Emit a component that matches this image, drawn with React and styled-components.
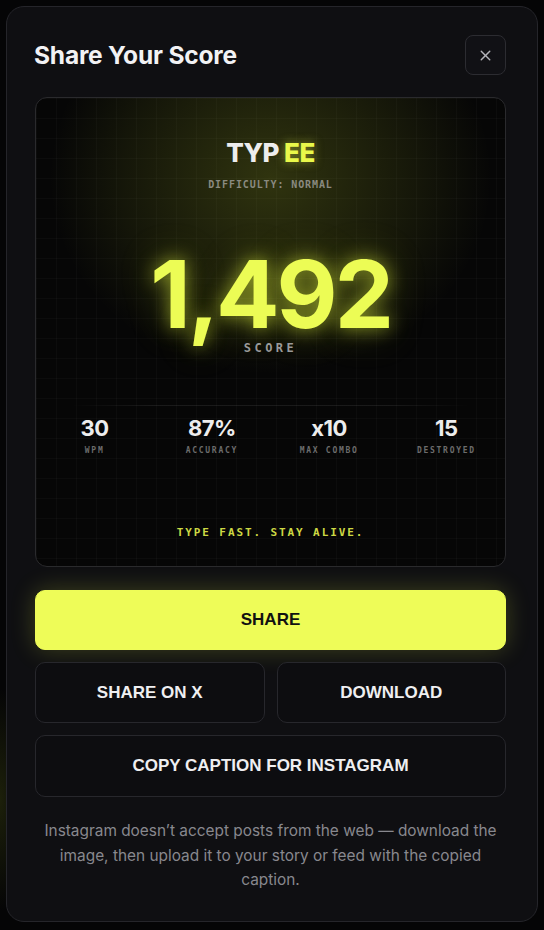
import styled, { createGlobalStyle } from "styled-components";
import { X } from "lucide-react";

const GlobalStyle = createGlobalStyle`
  html, body {
    margin: 0;
    padding: 0;
  }
  body {
    background:
      radial-gradient(ellipse 40px 160px at 0 800px, rgba(200, 230, 40, 0.12), transparent 70%),
      #050506;
    font-family: "Inter", "Liberation Sans", sans-serif;
    -webkit-font-smoothing: antialiased;
  }
`;

const Page = styled.div`
  padding: 6px;
  min-height: 930px;
  box-sizing: border-box;
`;

const Modal = styled.div`
  width: 532px;
  height: 916px;
  box-sizing: border-box;
  padding: 28px 31px 0 28px;
  background: #0f0f12;
  border: 1px solid #25252a;
  border-radius: 18px;
  display: flex;
  flex-direction: column;
`;

const Header = styled.div`
  display: flex;
  align-items: center;
  justify-content: space-between;
  height: 40px;
  margin-bottom: 22px;
`;

const Title = styled.h2`
  margin: 0 0 0 -1px;
  font-size: 24.5px;
  font-weight: 700;
  letter-spacing: -0.2px;
  color: #f2f2f4;
`;

const CloseButton = styled.button`
  width: 41px;
  height: 40px;
  display: flex;
  align-items: center;
  justify-content: center;
  background: #111115;
  border: 1px solid #2c2c31;
  border-radius: 8px;
  color: #b4b4ba;
  padding: 0;
  cursor: pointer;
`;

const Card = styled.div`
  height: 470px;
  box-sizing: border-box;
  border: 1px solid #2a2a2d;
  border-radius: 12px;
  overflow: hidden;
  display: flex;
  flex-direction: column;
  align-items: center;
  padding-top: 39px;
  background-color: #060606;
  background-image:
    radial-gradient(ellipse 270px 240px at 50% 17%, rgba(215, 235, 50, 0.2), rgba(215, 235, 50, 0.07) 55%, transparent 82%),
    linear-gradient(rgba(255, 255, 255, 0.025) 1px, transparent 1px),
    linear-gradient(90deg, rgba(255, 255, 255, 0.025) 1px, transparent 1px);
  background-size: 100% 100%, 20px 20px, 20px 20px;
`;

const Brand = styled.div`
  font-size: 26px;
  line-height: 32px;
  font-weight: 800;
  letter-spacing: -0.5px;
  color: #ededed;

  span {
    color: #e9f84a;
    text-shadow: 0 0 10px rgba(233, 248, 74, 0.5);
  }
`;

const Mono = styled.div`
  font-family: "DejaVu Sans Mono", "Liberation Mono", monospace;
  font-size: ${p => p.$size}px;
  letter-spacing: ${p => p.$spacing}px;
  color: ${p => p.$color};
  text-transform: uppercase;
  line-height: 1.4;
`;

const Difficulty = styled(Mono)`
  margin-top: 9px;
  font-weight: 700;
`;

const Score = styled.div`
  margin-top: 56px;
  font-size: 94px;
  line-height: 92px;
  font-weight: 700;
  letter-spacing: -3px;
  color: #ecfc55;
  text-shadow: 0 0 18px rgba(230, 250, 60, 0.55), 0 0 40px rgba(230, 250, 60, 0.25);
`;

const ScoreLabel = styled(Mono)`
  margin-top: 0;
  font-weight: 700;
`;

const Stats = styled.div`
  position: relative;
  align-self: stretch;
  display: grid;
  grid-template-columns: repeat(4, 1fr);
  margin-top: 48px;
  padding-top: 9px;

  &::before {
    content: "";
    position: absolute;
    top: 0;
    left: 36px;
    right: 36px;
    height: 1px;
    background: linear-gradient(90deg, transparent, rgba(255, 255, 255, 0.08) 20%, rgba(255, 255, 255, 0.08) 80%, transparent);
  }
`;

const Stat = styled.div`
  display: flex;
  flex-direction: column;
  align-items: center;
`;

const StatValue = styled.div`
  font-size: 22px;
  line-height: 28px;
  font-weight: 700;
  letter-spacing: -0.5px;
  color: #ededed;
`;

const StatLabel = styled(Mono)`
  margin-top: 3px;
  font-weight: 700;
`;

const Tagline = styled(Mono)`
  margin-top: auto;
  margin-bottom: 26px;
  font-weight: 700;
`;

const Actions = styled.div`
  margin-top: 23px;
  display: flex;
  flex-direction: column;
  gap: 12px;
`;

const Row = styled.div`
  display: grid;
  grid-template-columns: 1fr 1fr;
  gap: 12px;
`;

const Button = styled.button`
  height: ${p => p.$height || 61}px;
  border-radius: 10px;
  font-family: "Liberation Sans", Arial, sans-serif;
  font-size: 17px;
  font-weight: 700;
  text-transform: uppercase;
  cursor: pointer;
  border: 1px solid ${p => (p.$primary ? "#eefc58" : "#27272c")};
  background: ${p => (p.$primary ? "#eefc58" : "#0d0d10")};
  color: ${p => (p.$primary ? "#111111" : "#efeff1")};
  box-shadow: ${p => (p.$primary ? "0 0 24px rgba(230, 250, 70, 0.22)" : "none")};
`;

const Note = styled.p`
  margin: 22px 4px 0;
  text-align: center;
  font-size: 15.4px;
  line-height: 24.5px;
  color: #88888e;
`;

const stats = [
  { value: "30", label: "WPM" },
  { value: "87%", label: "Accuracy" },
  { value: "x10", label: "Max Combo" },
  { value: "15", label: "Destroyed" },
];

export default function App() {
  return (
    <Page>
      <GlobalStyle />
      <Modal>
        <Header>
          <Title>Share Your Score</Title>
          <CloseButton aria-label="Close">
            <X size={17} strokeWidth={2} />
          </CloseButton>
        </Header>

        <Card>
          <Brand>
            TYP <span>EE</span>
          </Brand>
          <Difficulty $size={10} $spacing={0.9} $color="#8a8a80">
            Difficulty: Normal
          </Difficulty>
          <Score>1,492</Score>
          <ScoreLabel $size={12} $spacing={3.5} $color="#9a9a9a">
            Score
          </ScoreLabel>
          <Stats>
            {stats.map(s => (
              <Stat key={s.label}>
                <StatValue>{s.value}</StatValue>
                <StatLabel $size={8} $spacing={1.7} $color="#6c6c6c">
                  {s.label}
                </StatLabel>
              </Stat>
            ))}
          </Stats>
          <Tagline $size={11} $spacing={1.9} $color="#cdd944">
            Type fast. Stay alive.
          </Tagline>
        </Card>

        <Actions>
          <Button $primary $height={60}>Share</Button>
          <Row>
            <Button>Share on X</Button>
            <Button>Download</Button>
          </Row>
          <Button $height={62}>Copy caption for Instagram</Button>
        </Actions>

        <Note>
          Instagram doesn’t accept posts from the web — download the image, then upload it to your story or feed with the copied caption.
        </Note>
      </Modal>
    </Page>
  );
}
